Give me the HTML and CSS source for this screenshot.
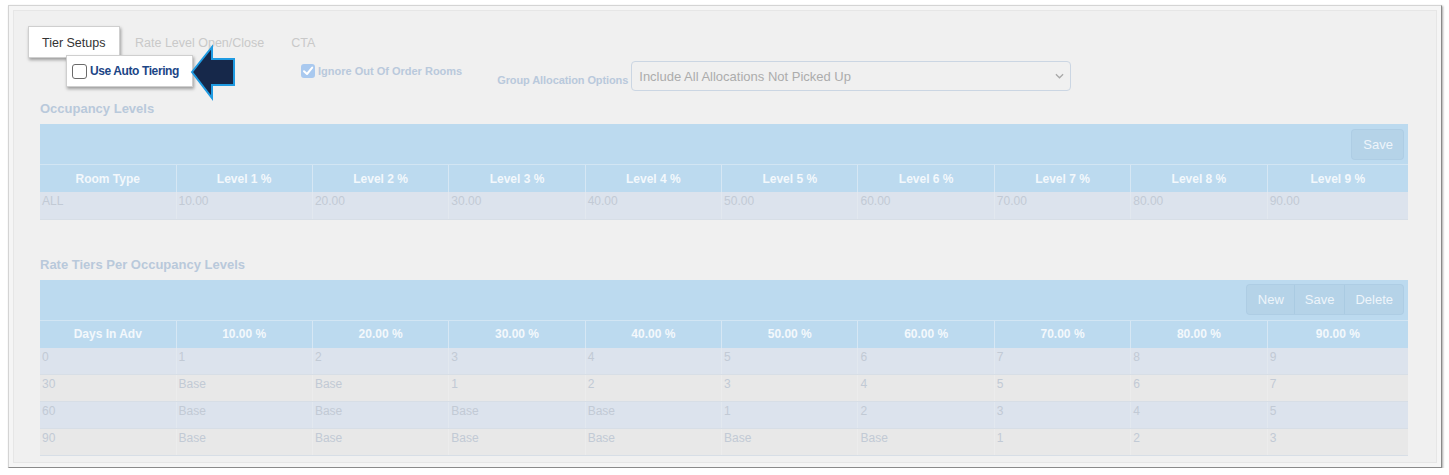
FILE: index.html
```html
<!DOCTYPE html>
<html>
<head>
<meta charset="utf-8">
<link rel="stylesheet" href="styles.css">
</head>
<body>
<div class="frame">
  <div class="panel">
    <div class="tabs">
      <div class="tab active">Tier Setups</div>
      <div class="tab">Rate Level Open/Close</div>
      <div class="tab">CTA</div>
    </div>
    <div class="options">
      <label class="ignore">
        <span class="checked"><svg viewBox="0 0 14 14" width="14" height="14"><path d="M3 7.2 L6 10 L11.2 3.6" fill="none" stroke="#fff" stroke-width="2" stroke-linecap="round" stroke-linejoin="round"/></svg></span>
        <span>Ignore Out Of Order Rooms</span>
      </label>
      <span class="group-label">Group Allocation Options</span>
      <div class="select">
        <span>Include All Allocations Not Picked Up</span>
        <svg viewBox="0 0 10 6" width="9" height="6"><path d="M1 1 L5 5 L9 1" fill="none" stroke="#a8a8a8" stroke-width="1.4"/></svg>
      </div>
    </div>

    <h3 class="section-title first">Occupancy Levels</h3>
    <div class="grid">
      <div class="toolbar">
        <div class="btn-group"><span class="btn">Save</span></div>
      </div>
      <table>
        <thead>
          <tr><th>Room Type</th><th>Level 1 %</th><th>Level 2 %</th><th>Level 3 %</th><th>Level 4 %</th><th>Level 5 %</th><th>Level 6 %</th><th>Level 7 %</th><th>Level 8 %</th><th>Level 9 %</th></tr>
        </thead>
        <tbody>
          <tr class="blue"><td>ALL</td><td>10.00</td><td>20.00</td><td>30.00</td><td>40.00</td><td>50.00</td><td>60.00</td><td>70.00</td><td>80.00</td><td>90.00</td></tr>
        </tbody>
      </table>
    </div>

    <h3 class="section-title second">Rate Tiers Per Occupancy Levels</h3>
    <div class="grid">
      <div class="toolbar">
        <div class="btn-group"><span class="btn">New</span><span class="btn">Save</span><span class="btn">Delete</span></div>
      </div>
      <table>
        <thead>
          <tr><th>Days In Adv</th><th>10.00 %</th><th>20.00 %</th><th>30.00 %</th><th>40.00 %</th><th>50.00 %</th><th>60.00 %</th><th>70.00 %</th><th>80.00 %</th><th>90.00 %</th></tr>
        </thead>
        <tbody>
          <tr class="blue"><td>0</td><td>1</td><td>2</td><td>3</td><td>4</td><td>5</td><td>6</td><td>7</td><td>8</td><td>9</td></tr>
          <tr class="grey"><td>30</td><td>Base</td><td>Base</td><td>1</td><td>2</td><td>3</td><td>4</td><td>5</td><td>6</td><td>7</td></tr>
          <tr class="blue"><td>60</td><td>Base</td><td>Base</td><td>Base</td><td>Base</td><td>1</td><td>2</td><td>3</td><td>4</td><td>5</td></tr>
          <tr class="grey"><td>90</td><td>Base</td><td>Base</td><td>Base</td><td>Base</td><td>Base</td><td>Base</td><td>1</td><td>2</td><td>3</td></tr>
        </tbody>
      </table>
    </div>

    <div class="popup">
      <span class="box"></span>
      <span class="popup-text">Use Auto Tiering</span>
    </div>
    <svg class="arrow" viewBox="0 0 50 58" width="50" height="58">
      <polygon points="4,28 24,3 24,15 46,15 46,41 24,41 24,54" fill="#16284a" stroke="#1f9be2" stroke-width="2" stroke-linejoin="miter"/>
    </svg>
  </div>
</div>
</body>
</html>
```

FILE: styles.css
```css
html, body {
  margin: 0;
  padding: 0;
  background: #ffffff;
  font-family: "Liberation Sans", Arial, Helvetica, sans-serif;
}

.frame {
  margin: 5px 0 0 8px;
  width: 1434px;
  height: 463px;
  box-sizing: border-box;
  border: 1px solid #d4d4d4;
  border-right-color: #8a8a8a;
  border-bottom-color: #8a8a8a;
  box-shadow: 1px 1px 2px rgba(0, 0, 0, 0.35);
  padding: 4px;
  background: #f5f5f5;
}

.panel {
  position: relative;
  height: 100%;
  box-sizing: border-box;
  background: #f0f0f0;
  border: 1px solid #e6e6e6;
  padding: 15px 26px 0 26px;
}

.tabs {
  display: flex;
  margin-left: -12px;
  height: 32px;
}

.tab {
  padding: 0 13px 0 14px;
  height: 32px;
  line-height: 34px;
  font-size: 12.5px;
  color: #c9c9c9;
  box-sizing: border-box;
  white-space: nowrap;
}

.tab.active {
  background: #ffffff;
  color: #333333;
  width: 92px;
  padding: 0 0 0 13px;
  border: 1px solid #cfcfcf;
  box-shadow: 1px 2px 3px rgba(0, 0, 0, 0.35);
  line-height: 32px;
  margin-right: 1px;
}

.options {
  display: flex;
  align-items: flex-start;
  margin-top: 3px;
  height: 30px;
}

.ignore {
  display: flex;
  align-items: center;
  margin-left: 261px;
  margin-top: 3px;
  font-size: 11px;
  font-weight: bold;
  color: #b9c9dc;
  gap: 3px;
}

.checked {
  display: inline-flex;
  width: 14px;
  height: 14px;
  border-radius: 3px;
  background: #a9c9ef;
}

.group-label {
  margin-left: 35px;
  margin-top: 13px;
  font-size: 11px;
  font-weight: bold;
  color: #b9c9dc;
  letter-spacing: -0.1px;
}

.select {
  display: flex;
  align-items: center;
  justify-content: space-between;
  margin-left: 3px;
  width: 440px;
  height: 30px;
  box-sizing: border-box;
  border: 1px solid #cbd6e3;
  border-radius: 4px;
  padding: 0 6px 0 7px;
  font-size: 13px;
  color: #acacac;
}

.section-title {
  margin: 0;
  font-size: 13px;
  line-height: 15px;
  font-weight: bold;
  color: #b9c9db;
}

.section-title.first {
  margin-top: 10px;
  margin-bottom: 8px;
}

.section-title.second {
  margin-top: 37px;
  margin-bottom: 8px;
}

.grid {
  width: 1368px;
}

.toolbar {
  height: 40px;
  background: #bcdaef;
  display: flex;
  justify-content: flex-end;
  align-items: center;
  padding-right: 5px;
  border-bottom: 1px solid #d2e5f3;
}

.btn-group {
  display: flex;
  height: 29px;
  border-radius: 3px;
  background: #b5d3e8;
  box-shadow: 0 0 0 1px #aecde4;
  overflow: hidden;
}

.btn {
  padding: 0 10px;
  line-height: 29px;
  font-size: 13px;
  color: #eef5fb;
  border-left: 1px solid #aacbe2;
}

.btn:first-child {
  border-left: none;
  padding: 0 10px 0 11px;
}

table {
  width: 100%;
  table-layout: fixed;
  border-collapse: collapse;
  font-size: 12px;
}

th {
  width: 135.4px;
  height: 27px;
  background: #bcdaef;
  color: #f3f8fc;
  font-weight: bold;
  text-align: center;
  border-left: 1px solid #d6e7f4;
  padding: 0;
}

th:first-child {
  width: 135.5px;
}

th:last-child {
  width: auto;
}

th:first-child,
td:first-child {
  border-left: none;
}

td {
  height: 27px;
  box-sizing: border-box;
  vertical-align: top;
  padding: 2px 2px 0 2px;
  color: #c2cad5;
  border-left: 1px solid #e2e8ef;
  border-bottom: 1px solid #d7dee6;
}

tr.blue td {
  background: #dce3ed;
}

tr.grey td {
  background: #e8e8e8;
  border-left-color: #ececec;
}

.popup {
  position: absolute;
  left: 52px;
  top: 44px;
  width: 127px;
  height: 32px;
  box-sizing: border-box;
  background: #ffffff;
  border: 1px solid #cfcfcf;
  box-shadow: 1px 2px 3px rgba(0, 0, 0, 0.35);
  display: flex;
  align-items: center;
  padding-left: 5px;
  gap: 3px;
}

.box {
  width: 15px;
  height: 15px;
  box-sizing: border-box;
  border: 1px solid #6a6a6a;
  border-radius: 3px;
  background: #fff;
}

.popup-text {
  font-size: 12px;
  font-weight: bold;
  color: #1c4586;
  letter-spacing: -0.4px;
}

.arrow {
  position: absolute;
  left: 174px;
  top: 33px;
}
```
